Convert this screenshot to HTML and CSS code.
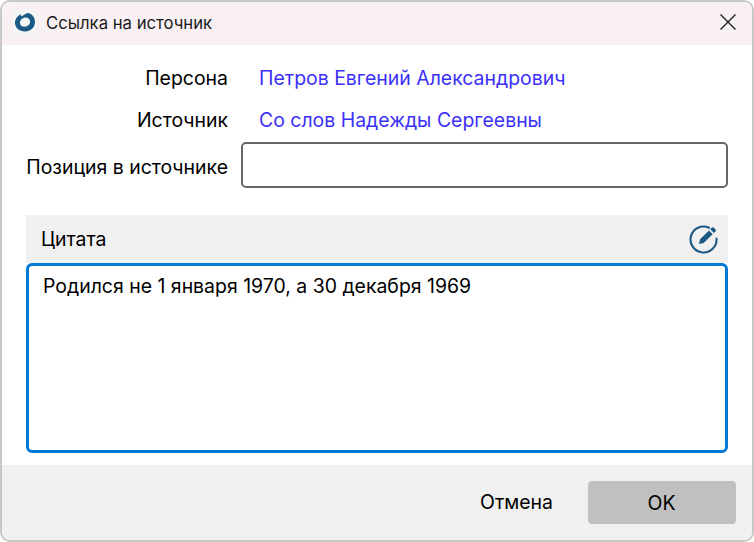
FILE: index.html
```html
<!DOCTYPE html>
<html lang="ru">
<head>
<meta charset="utf-8">
<title>Ссылка на источник</title>
<link rel="stylesheet" href="styles.css">
</head>
<body>
<div class="window">
  <header class="titlebar">
    <div class="app-icon">
      <svg width="24" height="24" viewBox="0 0 24 24"><rect width="24" height="24" fill="#f3f5f7"/><path fill-rule="evenodd" d="M14.500 3C19 3.600 22 7.200 22 12c0 5.400-4.500 9.500-10 9.500C6.300 21.500 2 17.800 2 12.800 2 8.600 4.600 5.400 8.300 4.200c-.8 1-.5 1.800.4 2.100C11 4.600 13 3.700 14.500 3zM12.800 7.400c-3.200 0-5.800 2.300-5.800 5.300 0 2.400 1.900 4.100 4.500 4.100 3.200 0 5.600-2.300 5.600-5.200 0-2.400-1.800-4.200-4.300-4.200z" fill="#1c5a85"/></svg>
    </div>
    <span class="title">Ссылка на источник</span>
    <svg class="close" width="16" height="16" viewBox="0 0 16 16"><path d="M.5.5l15 15M15.500.5l-15 15" fill="none" stroke="#1a1a1a" stroke-width="1.300"/></svg>
  </header>
  <main class="content">
    <div class="fields">
      <div class="label">Персона</div><a class="link">Петров Евгений Александрович</a>
      <div class="label">Источник</div><a class="link">Со слов Надежды Сергеевны</a>
      <div class="label label-position">Позиция в источнике</div><input class="position" type="text">
    </div>
    <section class="quote">
      <div class="quote-head">
        <span>Цитата</span>
        <svg width="30" height="30" viewBox="0 0 30 30"><path d="M20 3.700A13 13 0 1 0 27.500 14.500" fill="none" stroke="#1c5a85" stroke-width="2.100" stroke-linecap="round"/><path d="M10 20l1-4.700L20 6.500l3.700 3.700-9 8.800zM21.200 5.300l1.700-1.700a1.300 1.300 0 0 1 1.800 0l1.900 1.900a1.300 1.300 0 0 1 0 1.800l-1.700 1.700z" fill="#1c5a85"/></svg>
      </div>
      <textarea class="quote-text">Родился не 1 января 1970, а 30 декабря 1969</textarea>
    </section>
  </main>
  <footer class="footer">
    <span class="cancel">Отмена</span>
    <button class="ok" type="button">OK</button>
  </footer>
</div>
</body>
</html>
```
FILE: styles.css
```css
* { box-sizing: border-box; }
html, body { margin: 0; height: 100%; background: #fff; }
body { font-family: "Inter", "Noto Sans", sans-serif; font-size: 19.450px; color: #000; }
.window {
  width: 754px; height: 542px; display: flex; flex-direction: column;
  border: 2px solid #c8c8c8; border-radius: 10px; overflow: hidden; background: #fff;
}
.titlebar {
  height: 43px; flex: none; display: flex; align-items: center;
  background: #f8f0f2; padding: 0 16px 4px 11px;
}
.app-icon { width: 24px; height: 24px; flex: none; }
.app-icon svg { display: block; }
.title { margin: 2px 0 0 9px; font-size: 16.700px; color: #1a1a1a; flex: 1; }
.close { flex: none; }
.content { flex: 1; padding: 0 24px 12px; display: flex; flex-direction: column; }
.fields {
  display: grid; grid-template-columns: 202px 1fr; column-gap: 13px;
  grid-template-rows: 42px 42px 48px; align-items: center; margin-top: 12px;
}
.label { text-align: right; white-space: nowrap; }
.label-position { margin-top: 4px; }
.link { color: #3b30f8; padding-left: 18px; }
.position {
  width: 487px; height: 46px; border: 2px solid #666; border-radius: 5px; background: #fff; outline: none;
}
.quote { margin-top: 26px; flex: 1; display: flex; flex-direction: column; }
.quote-head {
  height: 48px; flex: none; background: #f0f0f0; display: flex; align-items: center;
  justify-content: space-between; padding: 0 9px 0 15px;
}
.quote-text {
  flex: 1; width: 100%; border: 3px solid #0078d4; border-radius: 6px; padding: 8px 14px;
  font: inherit; resize: none; outline: none; color: #000; background: #fff; display: block;
}
.footer {
  height: 75px; flex: none; background: #f0f0f0; display: flex; align-items: flex-start;
  justify-content: flex-end; padding: 16px 16px 0 0;
}
.cancel { line-height: 43px; margin-right: 35px; }
.ok {
  width: 148px; height: 43px; border: 0; border-radius: 4px; background: #c0c0c0;
  font: inherit; color: #000; padding: 0 1px 0 0;
}
```
